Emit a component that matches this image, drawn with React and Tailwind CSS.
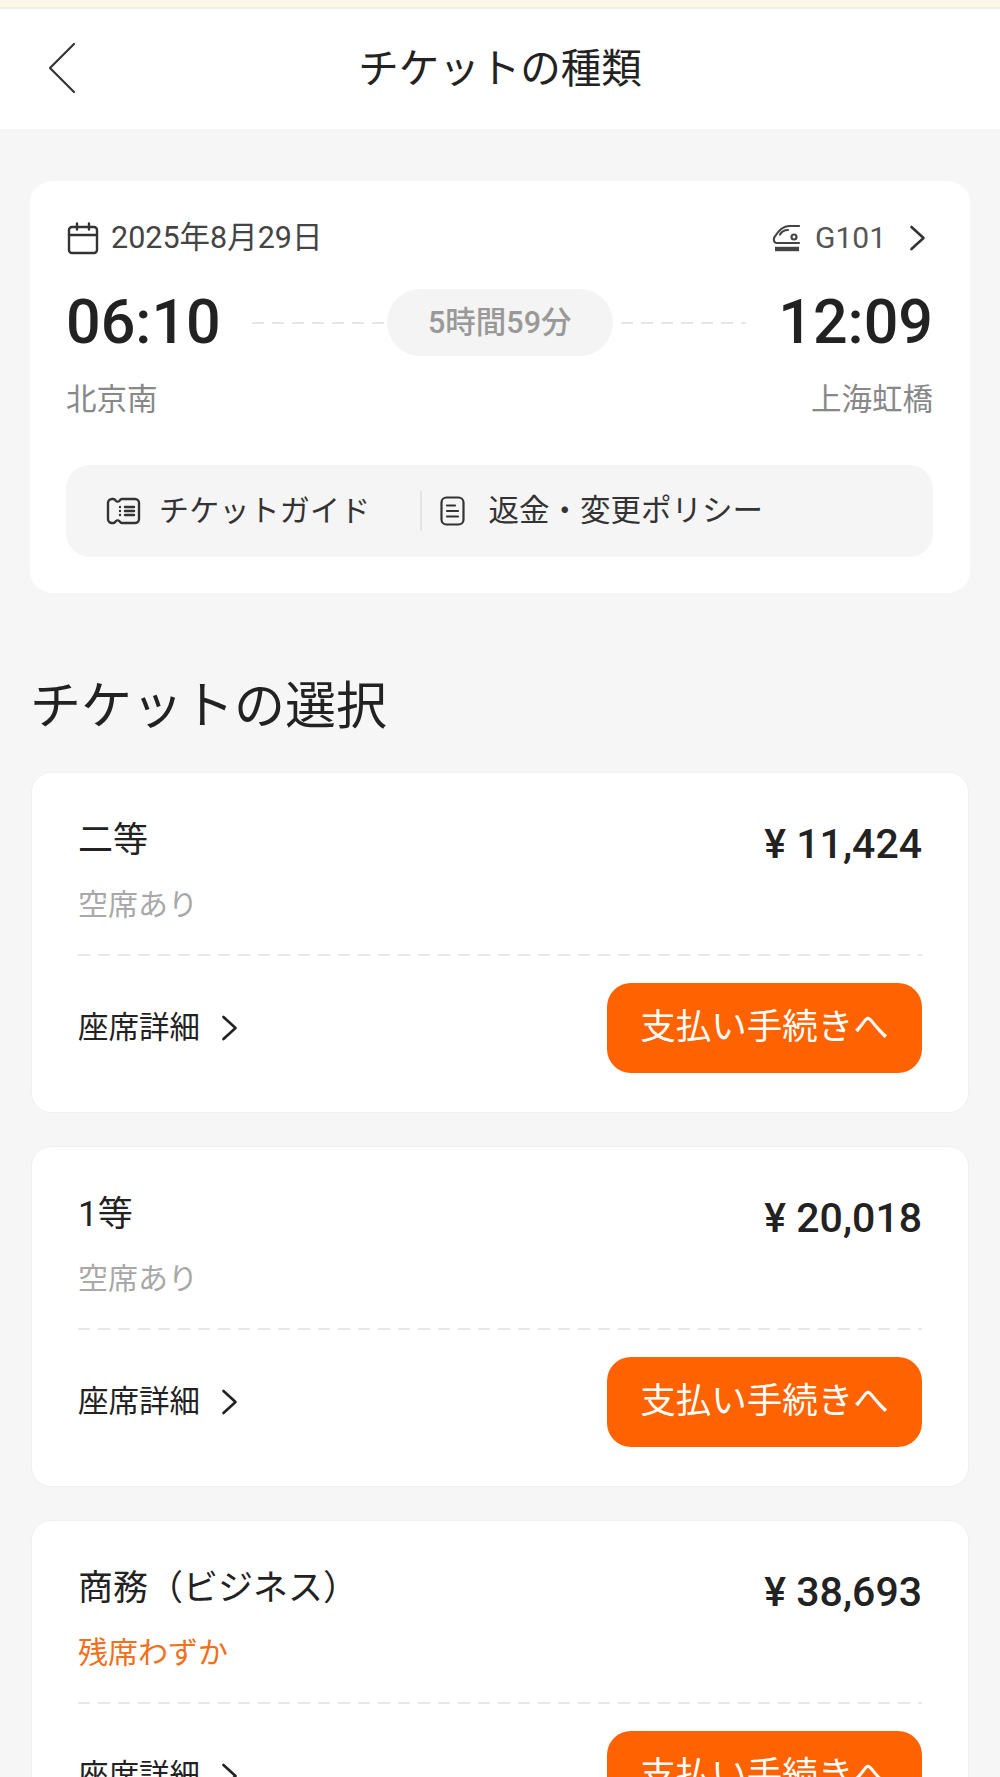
const fontStack = 'font-[Roboto,"Noto_Sans_CJK_JP",sans-serif]';

const tickets = [
  { name: '二等', price: '11,424', status: '空席あり', low: false },
  { name: '1等', price: '20,018', status: '空席あり', low: false },
  { name: '商務（ビジネス）', price: '38,693', status: '残席わずか', low: true },
];

function Chevron({ className }) {
  return (
    <svg className={className} viewBox="0 0 16 26" fill="none" stroke="currentColor" strokeWidth="2.6" strokeLinecap="round" strokeLinejoin="round">
      <path d="M2 2l12 11L2 24" />
    </svg>
  );
}

function CalendarIcon() {
  return (
    <svg className="w-[32px] h-[33px] shrink-0 text-[#333]" viewBox="0 0 32 33" fill="none" stroke="currentColor" strokeWidth="2.4" strokeLinecap="round" strokeLinejoin="round">
      <rect x="2" y="5" width="28" height="26" rx="3" />
      <path d="M2 13h28M10 1.5v6M22 1.5v6" />
    </svg>
  );
}

function TrainIcon() {
  return (
    <svg className="w-[29px] h-[28px] shrink-0 text-[#444]" viewBox="0 0 29 28" fill="none" stroke="currentColor" strokeWidth="2.2" strokeLinecap="round" strokeLinejoin="round">
      <path d="M27 2H17C10 2 5 9 2.500 13 1 16 2 19 5 19h22" />
      <path d="M8 10.500C10 7 13 6 16 6" />
      <circle cx="22" cy="13" r="2.500" />
      <path d="M3 25h24" strokeWidth="4.400" strokeLinecap="butt" />
    </svg>
  );
}

function TicketIcon() {
  return (
    <svg className="w-[35px] h-[28px] shrink-0 text-[#333]" viewBox="0 0 35 28" fill="none" stroke="currentColor" strokeWidth="2.400" strokeLinecap="round" strokeLinejoin="round">
      <path d="M6 2h1.500c1.500 0 1.800 1.200 2.500 2 .8.800 2.500.800 3.300 0 .7-.8 1-2 2.500-2H29c2.200 0 4 1.800 4 4v16c0 2.200-1.800 4-4 4H15.800c-1.500 0-1.800-1.200-2.500-2-.8-.8-2.500-.8-3.300 0-.7.800-1 2-2.500 2H6c-2.200 0-4-1.800-4-4V6c0-2.200 1.800-4 4-4z" />
      <path d="M14 10v.1M14 14v.1M14 18v.1M19 10h9M19 14h9M19 18h9" />
    </svg>
  );
}

function DocIcon() {
  return (
    <svg className="w-[25px] h-[30px] shrink-0 text-[#333]" viewBox="0 0 25 30" fill="none" stroke="currentColor" strokeWidth="2.200" strokeLinecap="round">
      <rect x="1.500" y="1.500" width="22" height="27" rx="5" />
      <path d="M7 9.500h8M7 15h11M7 20.500h11" />
    </svg>
  );
}

function TicketCard({ ticket }) {
  return (
    <div className="bg-white rounded-[20px] h-[341px] shrink-0 px-[46px] pt-[43px] border border-[#f0f0f0]">
      <div className="flex justify-between items-start h-[69px]">
        <div className="text-[35px] leading-[48px] text-[#222] mt-[1px]">{ticket.name}</div>
        <div className="text-[41px] leading-[54px] font-medium text-[#222] mt-[1px]">¥ {ticket.price}</div>
      </div>
      <div className={`text-[30px] leading-[40px] ${ticket.low ? 'text-[#f0701c]' : 'text-[#a8a8a8]'}`}>{ticket.status}</div>
      <div className="h-[2px] mt-[29px] bg-[repeating-linear-gradient(90deg,#e8e8e8_0_12px,transparent_12px_20px)]"></div>
      <div className="flex justify-between items-center mt-[27px]">
        <div className="flex items-center text-[#222]">
          <span className="text-[30.500px] leading-[40px]">座席詳細</span>
          <Chevron className="w-[17px] h-[26px] ml-[21px]" />
        </div>
        <button className="w-[315px] h-[90px] rounded-[24px] bg-[#ff6200] text-white text-[35.500px] font-normal">支払い手続きへ</button>
      </div>
    </div>
  );
}

export default function App() {
  return (
    <div className={`h-[1777px] w-[1000px] overflow-hidden bg-[#f6f6f6] ${fontStack}`}>
      <div className="h-[9px] bg-[#fbf7e9] border-b-2 border-[#f3efe0]"></div>

      {/* header */}
      <div className="relative h-[120px] bg-white flex items-center justify-center">
        <svg className="absolute left-[48px] top-[33px] w-[28px] h-[52px] text-[#333]" viewBox="0 0 28 52" fill="none" stroke="currentColor" strokeWidth="2.200" strokeLinecap="round" strokeLinejoin="round">
          <path d="M26 2L2 26l24 24" />
        </svg>
        <div className="text-[40.500px] leading-[56px] text-[#222]">チケットの種類</div>
      </div>

      {/* train summary */}
      <div className="mx-[30px] mt-[52px] h-[412px] bg-white rounded-[22px] pl-[36px] pr-[37px] pt-[40px]">
        <div className="flex items-center justify-between h-[34px]">
          <div className="flex items-center gap-[12px] pl-[1px]">
            <CalendarIcon />
            <span className="text-[30.500px] leading-[34px] text-[#444]">2025年8月29日</span>
          </div>
          <div className="flex items-center">
            <TrainIcon />
            <span className="text-[30px] leading-[34px] text-[#555] ml-[14px]">G101</span>
            <Chevron className="w-[17px] h-[26px] ml-[23px] mr-[7px] text-[#333]" />
          </div>
        </div>

        <div className="flex items-center mt-[34px] h-[67px]">
          <div className="text-[61px] leading-[67px] font-medium text-[#222]">06:10</div>
          <div className="w-[135px] h-[2px] ml-[31px] bg-[repeating-linear-gradient(90deg,#e6e6e6_0_12px,transparent_12px_20px)]"></div>
          <div className="w-[226px] h-[67px] rounded-full bg-[#f4f4f4] flex items-center justify-center text-[30.500px] font-medium text-[#999]">5時間59分</div>
          <div className="flex-1 h-[2px] ml-[8px] mr-[32px] bg-[repeating-linear-gradient(90deg,#e6e6e6_0_12px,transparent_12px_20px)]"></div>
          <div className="text-[61px] leading-[67px] font-medium text-[#222]">12:09</div>
        </div>

        <div className="flex justify-between mt-[23px] text-[30.500px] leading-[42px] text-[#888]">
          <span>北京南</span>
          <span>上海虹橋</span>
        </div>

        <div className="mt-[44px] h-[92px] rounded-[24px] bg-[#f5f5f5] flex items-center pl-[40px]">
          <TicketIcon />
          <span className="text-[30px] leading-[40px] text-[#333] ml-[18px] tracking-[0.200px]">チケットガイド</span>
          <div className="w-[2px] h-[40px] bg-[#e4e4e4] ml-[50px]"></div>
          <div className="ml-[18px]"><DocIcon /></div>
          <span className="text-[30.500px] leading-[40px] text-[#333] ml-[23px]">返金・変更ポリシー</span>
        </div>
      </div>

      <div className="text-[51px] leading-[70px] text-[#222] ml-[30px] mt-[79px]">チケットの選択</div>

      <div className="mx-[31px] flex flex-col gap-[33px] pt-[30px]">
        {tickets.map((t) => (
          <TicketCard key={t.price} ticket={t} />
        ))}
      </div>
    </div>
  );
}
